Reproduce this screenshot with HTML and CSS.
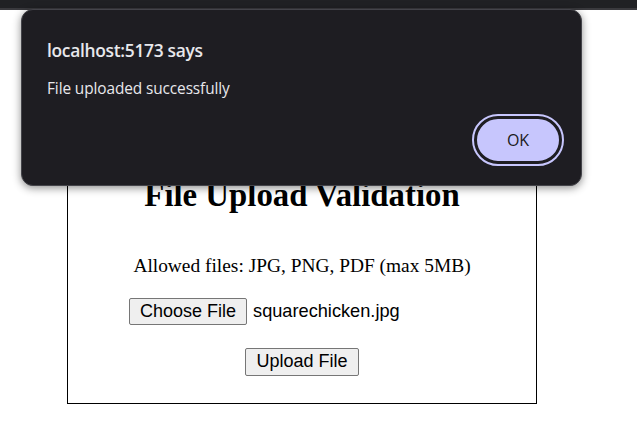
FILE: index.html
```html
<!DOCTYPE html>
<html>
<head>
<meta charset="utf-8">
<link rel="stylesheet" href="styles.css">
</head>
<body>
<div class="topbar"></div>
<main class="page">
  <div class="card">
    <h1 class="title">File Upload Validation</h1>
    <p class="hint">Allowed files: JPG, PNG, PDF (max 5MB)</p>
    <div class="file-input">
      <span class="btn">Choose File</span>
      <span class="file-name">squarechicken.jpg</span>
    </div>
    <button class="btn upload">Upload File</button>
  </div>
</main>
<div class="dialog">
  <div class="dialog-title">localhost:5173 says</div>
  <div class="dialog-msg">File uploaded successfully</div>
  <div class="dialog-actions">
    <button class="ok">OK</button>
  </div>
</div>
</body>
</html>
```
FILE: styles.css
```css
html, body {
  margin: 0;
  padding: 0;
  background: #ffffff;
}
body {
  width: 637px;
  height: 431px;
  overflow: hidden;
  position: relative;
  font-family: "Liberation Serif", "Times New Roman", serif;
}
.topbar {
  height: 8px;
  background: #202124;
  border-bottom: 2px solid #3a3a3e;
}
.page {
  padding: 125px 0 0 67px;
}
.card {
  width: 470px;
  box-sizing: border-box;
  border: 1px solid #000;
  display: flex;
  flex-direction: column;
  align-items: center;
  padding: 20px 0 27px;
}
.title {
  margin: 21px 0 0;
  font-size: 32.8px;
  line-height: 37px;
  font-weight: bold;
}
.hint {
  margin: 41px 0 0;
  font-size: 19.4px;
  line-height: 22px;
}
.file-input {
  margin-top: 21px;
  width: 346px;
  display: flex;
  align-items: center;
  gap: 6px;
  font-family: "Liberation Sans", Arial, sans-serif;
  font-size: 18.2px;
}
.btn {
  display: inline-block;
  font-family: "Liberation Sans", Arial, sans-serif;
  font-size: 18px;
  line-height: 21px;
  color: #000;
  background: #efefef;
  border: 1px solid #767676;
  border-radius: 2px;
  padding: 2px 10px 2px;
}
.upload {
  margin-top: 23px;
  padding: 2px 10px 3px;
  font-size: 18px;
}
.file-name {
  color: #000;
}
.dialog {
  position: absolute;
  left: 21px;
  top: 9px;
  width: 561px;
  height: 177px;
  box-sizing: border-box;
  background: #1e1d22;
  border: 1px solid #44444a;
  border-radius: 12px;
  box-shadow: 0 2px 8px rgba(0, 0, 0, 0.45);
  padding: 28px 20px 20px 25px;
  color: #e8e8ec;
  font-family: "Open Sans", "Noto Sans", sans-serif;
}
.dialog-title {
  font-size: 17.4px;
  font-weight: 600;
  line-height: 24px;
  letter-spacing: -0.3px;
}
.dialog-msg {
  margin-top: 17px;
  font-size: 15.4px;
  line-height: 20px;
  letter-spacing: -0.1px;
}
.dialog-actions {
  display: flex;
  justify-content: flex-end;
  margin-top: 17px;
}
.ok {
  width: 88px;
  height: 48px;
  border-radius: 24px;
  background: #c7c6fd;
  border: 3px solid #1e1d22;
  outline: 2px solid #c7c6fd;
  outline-offset: 0;
  color: #1a1a20;
  font-family: "Open Sans", "Noto Sans", sans-serif;
  font-size: 16px;
  margin-right: -1px;
  padding: 0;
}
```
